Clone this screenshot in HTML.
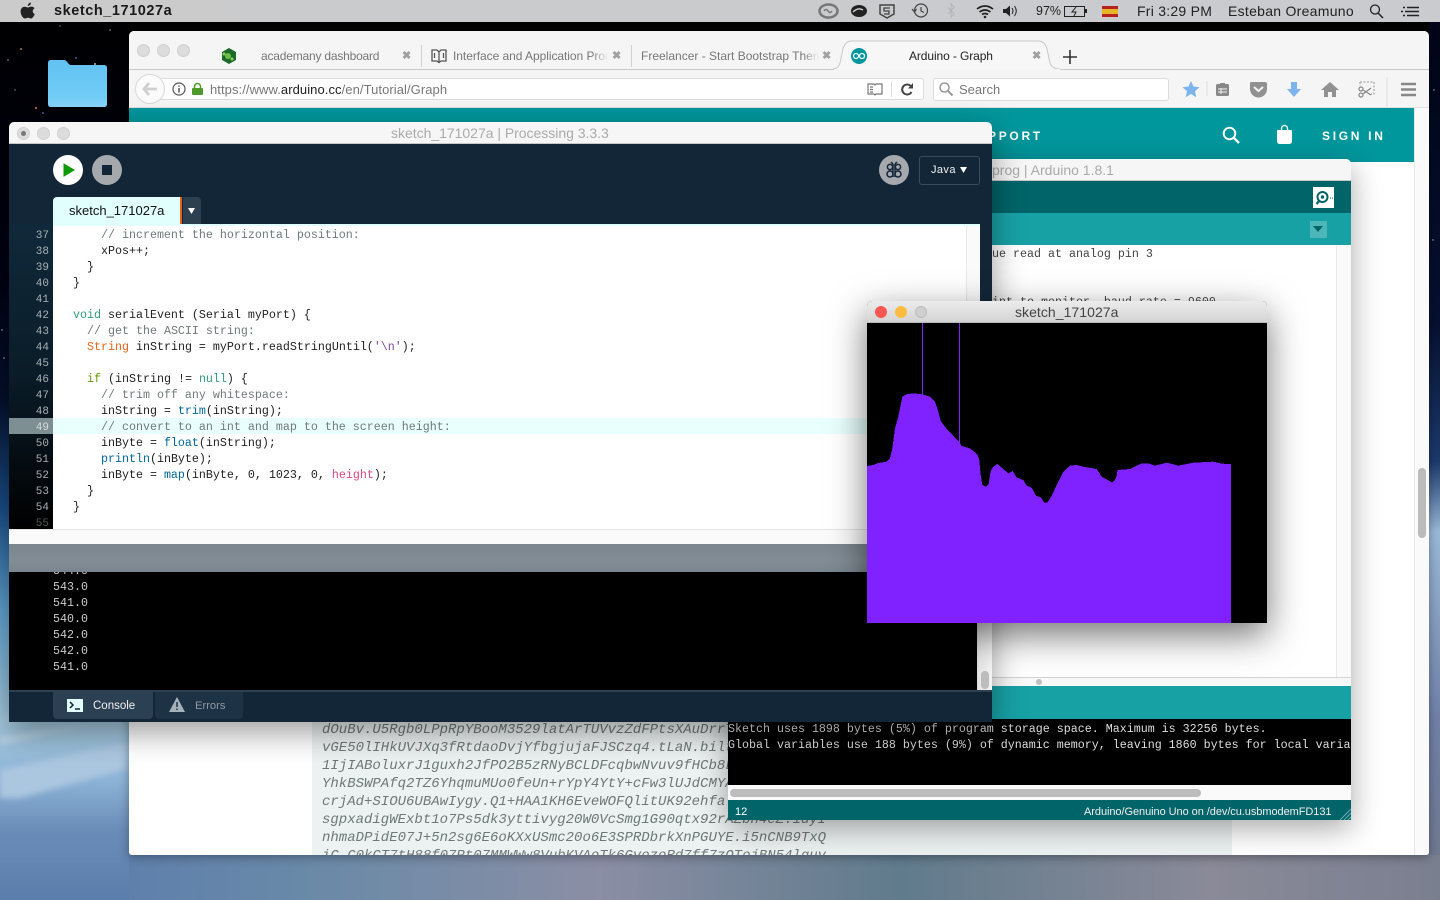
<!DOCTYPE html>
<html><head><meta charset="utf-8">
<style>
html,body{margin:0;padding:0;width:1440px;height:900px;overflow:hidden;background:#000;font-family:"Liberation Sans",sans-serif}
.a{position:absolute;white-space:pre}
.m{font-family:"Liberation Mono",monospace;font-size:11.67px;line-height:16px}
svg{position:absolute;overflow:visible}
.tab{font-size:12px;color:#777;top:49px;line-height:14px;overflow:hidden}
.fade{-webkit-mask-image:linear-gradient(90deg,#000 calc(100% - 16px),transparent);mask-image:linear-gradient(90deg,#000 calc(100% - 16px),transparent)}
.x{font-size:11px;color:#a0a0a0;font-weight:bold;top:49px;line-height:14px}
.c{color:#707a7a}.k{color:#33997e}.o{color:#e2661a}.i{color:#669900}.f{color:#006699}.h{color:#d94a7a}.s{color:#7d4793}
.menu{font-size:14px;color:#222;top:3px;line-height:16px}
.dot{border-radius:50%;width:11px;height:11px;background:#dcdcdc;border:1px solid #d0d0d0;box-sizing:content-box}
</style></head><body>
<div class="a" style="left:0;top:0;width:1440px;height:900px;background:linear-gradient(#000 0,#010214 280px,#04102c 400px,#1a4f8a 510px,#5fa3d0 610px,#a6cbe0 720px,#8db3d6 780px,#6a8db8 830px,#5b7dab 900px)"></div>
<div class="a" style="left:1429px;top:22px;width:11px;height:878px;background:linear-gradient(#020518 0,#061030 300px,#1c3a6c 440px,#9ab8d8 510px,#7080a8 700px,#70788c 860px,#7a7e8e 900px)"></div>
<div class="a" style="left:129px;top:855px;width:1311px;height:45px;background:linear-gradient(90deg,#5f80ac 0,#6a8aa8 190px,#8b8ea5 470px,#607b8c 770px,#8a8a98 1080px,#7a7f90 1311px)"></div>
<svg style="left:0;top:0" width="1440" height="900">
<g style="filter:blur(3px)"><polygon points="0,745 90,725 0,736" fill="#b5cfe2"/>
<polygon points="0,770 129,742 129,768 20,798 0,798" fill="#abc6df"/></g>
<g fill="#fff" opacity=".7"><circle cx="21" cy="49" r="1" fill="#e8a070"/><circle cx="36" cy="108" r="1.2" fill="#e89060"/><circle cx="43" cy="113" r="1" fill="#7080d0"/><circle cx="76" cy="58" r="1" fill="#6070c0"/><circle cx="95" cy="64" r="1"/><circle cx="8" cy="60" r=".7"/><circle cx="110" cy="30" r=".7"/><circle cx="60" cy="26" r=".6"/><circle cx="15" cy="90" r=".6"/><circle cx="1434" cy="90" r=".7"/><circle cx="2" cy="330" r=".8"/><circle cx="4" cy="358" r=".8"/><circle cx="1433" cy="240" r=".7"/></g>
</svg>
<!-- folder -->
<div class="a" style="left:48px;top:60px;width:59px;height:47px;background:linear-gradient(#62c2f2,#72ccf6 80%,#8ad4f7);clip-path:path('M0 3Q0 0 3 0H16Q18 0 20 3L22 5H56Q59 5 59 8V44Q59 47 56 47H3Q0 47 0 44Z')"></div>

<!-- menu bar -->
<div class="a" style="left:0;top:0;width:1440px;height:22px;background:linear-gradient(90deg,#cbcbcb,#c9cbcf)"></div>
<svg style="left:20px;top:2px" width="16" height="17" viewBox="0 0 16 17"><path d="M11 .5c0 2-1.500 3.500-3.200 3.500C7.700 2.200 9.300.6 11 .5zM14.800 12c-.9 2.300-2.400 4.500-3.800 4.500-1.200 0-1.500-.7-3-.7s-1.900.7-3 .7C3 16.500.6 12.800.6 9.500.6 6.300 2.700 4.700 4.700 4.700c1.300 0 2.300.8 3.200.8s1.900-.9 3.500-.9c1.100 0 2.400.5 3.200 1.700-2.700 1.600-2.300 5 .2 5.700z" fill="#222"/></svg>
<div class="a" style="left:54px;top:3px;font-size:14.5px;font-weight:bold;color:#1a1a1a;line-height:16px;letter-spacing:.56px">sketch_171027a</div>
<svg style="left:818px;top:3px" width="600" height="17" fill="none" stroke="#444">
<ellipse cx="10.500" cy="8" rx="9" ry="6.500" stroke="#777" stroke-width="2.500"/><path d="M6 8q2-3 4 0t4 0" stroke="#777" stroke-width="1.500"/>
<ellipse cx="41" cy="8" rx="8" ry="6" fill="#222" stroke="none"/><path d="M35 9q5-5 10-2" stroke="#ccc" stroke-width="1.500"/>
<path d="M62 2h14v9l-7 4-7-4z" stroke-width="1.500"/><path d="M72 5h-6v3h5v3h-5" stroke-width="1.300"/>
<circle cx="103" cy="7.500" r="6.500" stroke-width="1.200"/><path d="M103 4v4l3 1.500M94 6l2.500 3 2-3" stroke-width="1.200"/>
<path d="M133 1l3 3-3 3.500 3 3.500-3 3V1zM130 4.500l6 6.500M130 11l6-6.500" stroke="#b4b4b4"/>
<path d="M159 6q8-6 16 0M161.500 9q5.500-4 11 0M164 11.500q3-2 6 0" stroke-width="1.700" stroke="#222"/><circle cx="167" cy="14" r="1.300" fill="#222" stroke="none"/>
<path d="M185 6h3l4-3.500v11L188 10h-3z" fill="#222" stroke="none"/><path d="M194 5q2 3 0 6M196.500 3q3.500 5 0 10" stroke="#222"/>
<rect x="246.500" y="3.500" width="20" height="10" stroke="#222"/><path d="M258 4l-4 5h4l-2 4" stroke="#222"/><rect x="267" y="6" width="2" height="4" fill="#222" stroke="none"/>
<rect x="284" y="3" width="16" height="11" fill="#b8211c" stroke="none"/><rect x="284" y="6" width="16" height="5" fill="#e5b52a" stroke="none"/>
<circle cx="557" cy="6.500" r="4.500" stroke="#222" stroke-width="1.300"/><path d="M560 10l5 5" stroke="#222" stroke-width="1.500"/>
<path d="M585 4.500h2M589 4.500h12M583 8.500h2M587 8.500h14M585 12.500h2M589 12.500h12" stroke="#222" stroke-width="1.500"/>
</svg>
<div class="a menu" style="left:1036px;font-size:12.500px">97%</div>
<div class="a menu" style="left:1137px;letter-spacing:.25px">Fri 3:29 PM</div>
<div class="a menu" style="left:1228px;letter-spacing:.28px">Esteban Oreamuno</div>

<!-- browser -->
<div class="a" style="left:129px;top:31px;width:1300px;height:824px;background:#fff;border-radius:5px 5px 3px 3px;overflow:hidden;box-shadow:0 2px 10px rgba(0,0,0,.35)">
<div class="a" style="left:0;top:0;width:1300px;height:77px;background:#f5f5f5"></div>
<div class="a" style="left:0;top:38px;width:1300px;height:1px;background:#c8c8c8"></div>
<div class="a" style="left:0;top:76px;width:1300px;height:1px;background:#e0e0e0"></div>
<div class="a" style="left:0;top:77px;width:1285px;height:54px;background:#00979c"></div>
<div class="a" style="left:1285px;top:77px;width:15px;height:747px;background:#fafafa;border-left:1px solid #e8e8e8;box-sizing:border-box"></div>
<div class="a" style="left:1289px;top:437px;width:8px;height:70px;border-radius:4px;background:#bbb"></div>
<div class="a" style="left:183px;top:131px;width:920px;height:693px;background:#ecf1f1"></div>
<div class="a" style="left:1103px;top:131px;width:182px;height:693px;background:#fff"></div>
<div class="a" style="left:193px;top:690px;width:520px;height:134px;overflow:hidden;font:italic 14px/18px 'Liberation Mono',monospace;color:#6f7878;white-space:pre">dOuBv.U5Rgb0LPpRpYBooM3529latArTUVvzZdFPtsXAuDrrT
vGE50lIHkUVJXq3fRtdaoDvjYfbgjujaFJSCzq4.tLaN.bilt
1IjIABoluxrJ1guxh2JfPO2B5zRNyBCLDFcqbwNvuv9fHCb8L
YhkBSWPAfq2TZ6YhqmuMUo0feUn+rYpY4YtY+cFw3lUJdCMYA
crjAd+SIOU6UBAwIygy.Q1+HAA1KH6EveWOFQlitUK92ehfal
sgpxadigWExbt1o7Ps5dk3yttivyg20W0VcSmg1G90qtx92rAZbn4eZ.1uyI
nhmaDPidE07J+5n2sg6E6oKXxUSmc20o6E3SPRDbrkXnPGUYE.i5nCNB9TxQ
iC.C0kCT7tH88f07Pt07MMWWw8VubKVAoTk6GvozoRd7ff7zOTojBN54lguv</div>
</div>
<!-- browser chrome -->
<div class="a dot" style="left:137px;top:44px"></div><div class="a dot" style="left:157px;top:44px"></div><div class="a dot" style="left:177px;top:44px"></div>
<svg style="left:221px;top:48px" width="16" height="16"><path d="M8 0l7 4v8l-7 4-7-4V4z" fill="#1c6a28"/><circle cx="7" cy="8" r="3" fill="#6cc04a"/><circle cx="3" cy="6" r="1.500" fill="#8fd060"/><circle cx="11" cy="11" r="1.500" fill="#8fd060"/></svg>
<div class="a tab" style="left:261px;width:122px;letter-spacing:-.2px">academany dashboard</div><div class="a x" style="left:402px">✖</div>
<div class="a" style="left:421px;top:45px;width:1px;height:22px;background:#d0d0d0"></div>
<svg style="left:431px;top:49px" width="16" height="14" fill="none" stroke="#555" stroke-width="1.300"><path d="M1 1h5l2 2 2-2h5v11h-5l-2 1.500L6 12H1zM8 3v10M3.500 4v5M12.500 4v5"/></svg>
<div class="a tab fade" style="left:453px;width:155px;letter-spacing:-.05px">Interface and Application Prog</div><div class="a x" style="left:612px">✖</div>
<div class="a" style="left:631px;top:45px;width:1px;height:22px;background:#d0d0d0"></div>
<div class="a tab fade" style="left:641px;width:178px">Freelancer - Start Bootstrap Theme</div><div class="a x" style="left:822px">✖</div>
<svg style="left:0;top:0" width="1440" height="72"><path d="M833 69q5 0 7-6l3-14q2-8 9-8h186q7 0 9 8l3 14q2 6 10 6" fill="#f7f7f7" stroke="#c8c8c8"/><path d="M834 69h226v1H834z" fill="#f5f5f5"/></svg>
<svg style="left:851px;top:48px" width="16" height="16"><circle cx="8" cy="8" r="8" fill="#00979c"/><circle cx="5" cy="8" r="2.500" fill="none" stroke="#fff" stroke-width="1.200"/><circle cx="11" cy="8" r="2.500" fill="none" stroke="#fff" stroke-width="1.200"/></svg>
<div class="a tab" style="left:909px;color:#222;letter-spacing:-.1px">Arduino - Graph</div><div class="a x" style="left:1032px">✖</div>
<svg style="left:1063px;top:50px" width="14" height="14"><path d="M7 0v14M0 7h14" stroke="#333" stroke-width="1.600"/></svg>
<div class="a" style="left:150px;top:78px;width:774px;height:22px;background:#fff;border:1px solid #dcdcdc;border-radius:3px;box-sizing:border-box"></div>
<div class="a" style="left:135px;top:74px;width:30px;height:30px;border-radius:50%;background:#fbfbfb;border:1px solid #d8d8d8;box-sizing:border-box"></div>
<svg style="left:142px;top:82px" width="16" height="14"><path d="M7 1L2 7l5 6M2 7h13" fill="none" stroke="#cfcfcf" stroke-width="2.800"/></svg>
<svg style="left:172px;top:82px" width="14" height="14"><circle cx="7" cy="7" r="6" fill="none" stroke="#555" stroke-width="1.200"/><path d="M7 6v4.500M7 3.500v1.300" stroke="#555" stroke-width="1.500"/></svg>
<svg style="left:192px;top:83px" width="11" height="12"><rect x="0" y="5" width="11" height="7" rx="1" fill="#4d9a2a"/><path d="M2.500 5V3.500a3 3 0 016 0V5" fill="none" stroke="#4d9a2a" stroke-width="1.500"/></svg>
<div class="a" style="left:210px;top:82px;font-size:13px;line-height:15px;color:#777;letter-spacing:.07px">https://www.<span style="color:#222">arduino.cc</span>/en/Tutorial/Graph</div>
<svg style="left:867px;top:83px" width="16" height="13" fill="none" stroke="#777" stroke-width="1.200"><path d="M1 1h6l1 1 1-1h6v10H9l-1 1-1-1H1zM3 4h3M3 6.500h3M3 9h3"/></svg>
<div class="a" style="left:891px;top:82px;width:1px;height:15px;background:#ddd"></div>
<svg style="left:901px;top:83px" width="13" height="13"><path d="M10.500 4a5 5 0 100 5" fill="none" stroke="#444" stroke-width="2"/><path d="M12 0v5.500H7z" fill="#444"/></svg>
<div class="a" style="left:933px;top:78px;width:236px;height:23px;background:#fff;border:1px solid #dcdcdc;border-radius:3px;box-sizing:border-box"></div>
<svg style="left:939px;top:82px" width="14" height="14" fill="none" stroke="#999"><circle cx="5.500" cy="5.500" r="4.500" stroke-width="1.500"/><path d="M9 9l4.500 4.500" stroke-width="2"/></svg>
<div class="a" style="left:959px;top:82px;font-size:13px;line-height:15px;color:#777">Search</div>
<svg style="left:1170px;top:70px" width="259" height="38">
<path d="M21 11l2.500 5.500 6 .7-4.500 4 1.300 6L21 24l-5.300 3.200 1.300-6-4.500-4 6-.7z" fill="#7db4ee"/>
<path d="M37 11v15" stroke="#ddd"/>
<rect x="46" y="14" width="13" height="12" rx="1.500" fill="#888"/><path d="M50 13h5v3h-5z" fill="#888"/><path d="M48 19h9M48 22h9M51 18v6" stroke="#f5f5f5"/>
<path d="M81 12h14q2 0 2 2v5a8.500 8.500 0 01-17 0v-5q0-2 1-2z" fill="#919191"/><path d="M84 17l4.500 4 4.500-4" fill="none" stroke="#f5f5f5" stroke-width="2"/>
<path d="M121 12h6v7h4l-7 8-7-8h4z" fill="#7db4ee"/>
<path d="M160 12l9 8h-3v7h-4v-5h-4v5h-4v-7h-3z" fill="#919191"/>
<path d="M190 12h14v12h-3M190 12v4" stroke="#999" stroke-dasharray="2 1.500" fill="none"/><circle cx="191" cy="25" r="2" fill="none" stroke="#888" stroke-width="1.200"/><circle cx="191" cy="19" r="2" fill="none" stroke="#888" stroke-width="1.200"/><path d="M193 20l8 5M193 24l8-6" stroke="#888" stroke-width="1.200"/>
<path d="M217 7v31" stroke="#e0e0e0"/>
<path d="M231 14h15M231 19.500h15M231 25h15" stroke="#888" stroke-width="2.400"/>
</svg>
<div class="a" style="left:988px;top:129px;font-size:12px;font-weight:bold;color:#fff;letter-spacing:2.700px;line-height:15px">PPORT</div>
<svg style="left:1222px;top:126px" width="18" height="18" fill="none" stroke="#fff"><circle cx="7.500" cy="7.500" r="5.800" stroke-width="1.900"/><path d="M11.700 11.700l5.300 5.300" stroke-width="2.300"/></svg>
<svg style="left:1277px;top:125px" width="15" height="19"><path d="M1 5h13q1 0 1 1v10q0 3-3 3H3q-3 0-3-3V6q0-1 1-1z" fill="#fff"/><path d="M4.500 6V3.500a3 3 0 016 0V6" fill="none" stroke="#fff" stroke-width="1.300"/></svg>
<div class="a" style="left:1322px;top:129px;font-size:12px;font-weight:bold;color:#fff;letter-spacing:2.700px;line-height:15px">SIGN IN</div>

<!-- arduino window -->
<div class="a" style="left:728px;top:159px;width:623px;height:661px;background:#fff;border-radius:5px 5px 0 0;overflow:hidden;box-shadow:0 8px 30px rgba(0,0,0,.35)">
<div class="a" style="left:0;top:0;width:623px;height:22px;background:#f6f6f6;border-bottom:1px solid #c8c8c8;box-sizing:border-box"></div>
<div class="a" style="left:264px;top:3px;font-size:14px;line-height:16px;color:#aaa">prog | Arduino 1.8.1</div>
<div class="a" style="left:0;top:22px;width:623px;height:32px;background:#006468"></div>
<div class="a" style="left:0;top:54px;width:623px;height:32px;background:#17a1a5"></div>
<div class="a" style="left:585px;top:28px;width:21px;height:21px;background:#fff"></div>
<svg style="left:585px;top:28px" width="21" height="21" fill="none" stroke="#006468"><circle cx="9.500" cy="10" r="5" stroke-width="2"/><circle cx="9.500" cy="10" r="1.200" fill="#006468"/><path d="M6 14l-2.500 3" stroke-width="2.200"/><path d="M17 11h1M19 11h1"/></svg>
<div class="a" style="left:582px;top:62px;width:17px;height:17px;background:#4cb6b9"></div>
<svg style="left:585px;top:67px" width="11" height="7"><path d="M0 0h10L5 6z" fill="#006468"/></svg>
<div class="a" style="left:608px;top:86px;width:15px;height:432px;background:#fafafa;border-left:1px solid #e8e8e8;box-sizing:border-box"></div>
<div class="a m" style="left:264px;top:87px;color:#444">ue read at analog pin 3


int to monitor, baud rate = 9600</div>
<div class="a" style="left:0;top:518px;width:623px;height:1px;background:#d4d4d4"></div>
<div class="a" style="left:0;top:519px;width:623px;height:8px;background:#f8f8f8"></div>
<div class="a" style="left:308px;top:520px;width:6px;height:6px;border-radius:50%;background:#c0c0c0"></div>
<div class="a" style="left:0;top:527px;width:623px;height:33px;background:#17a1a5"></div>
<div class="a" style="left:0;top:560px;width:623px;height:66px;background:#000"></div>
<div class="a m" style="left:0;top:562px;color:#ddd">Sketch uses 1898 bytes (5%) of program storage space. Maximum is 32256 bytes.
Global variables use 188 bytes (9%) of dynamic memory, leaving 1860 bytes for local variables. Maximum is</div>
<div class="a" style="left:0;top:626px;width:623px;height:15px;background:#fafafa"></div>
<div class="a" style="left:2px;top:630px;width:471px;height:8px;border-radius:4px;background:#bdbdbd"></div>
<div class="a" style="left:0;top:641px;width:623px;height:20px;background:#006468"></div>
<div class="a" style="left:7px;top:647px;font-size:11px;line-height:13px;color:#fff">12</div>
<div class="a" style="left:356px;top:647px;font-size:11px;line-height:13px;color:#eee;letter-spacing:-.06px">Arduino/Genuino Uno on /dev/cu.usbmodemFD131</div>
<svg style="left:612px;top:650px" width="11" height="11"><path d="M0 11L11 0M4 11l7-7M8 11l3-3" stroke="#6aa8aa"/></svg>
</div>

<!-- processing window -->
<div class="a" style="left:9px;top:122px;width:983px;height:600px;background:#132638;border-radius:5px 5px 0 0;overflow:hidden;box-shadow:0 10px 32px rgba(0,0,0,.4)">
<div class="a" style="left:0;top:0;width:983px;height:22px;background:#f6f6f6;border-bottom:1px solid #c8c8c8;box-sizing:border-box"></div>
<div class="a" style="left:382px;top:3px;font-size:14px;line-height:16px;color:#aaa;letter-spacing:-.02px">sketch_171027a | Processing 3.3.3</div>
<div class="a dot" style="left:8px;top:5px"></div><div class="a dot" style="left:28px;top:5px"></div><div class="a dot" style="left:48px;top:5px"></div>
<div class="a" style="left:12px;top:9px;width:5px;height:5px;border-radius:50%;background:#777"></div>
<svg style="left:44px;top:33px" width="70" height="30"><circle cx="15" cy="15" r="15" fill="#fff"/><path d="M11 9l10 6-10 6z" fill="#0a9a00" stroke="#0a9a00"/><circle cx="54" cy="15" r="15" fill="#a5a9ae"/><rect x="49" y="10" width="10" height="10" fill="#132638"/></svg>
<svg style="left:870px;top:33px" width="30" height="30"><circle cx="15" cy="15" r="15" fill="#a5a9ae"/><g fill="none" stroke="#132638" stroke-width="1.500"><circle cx="11" cy="12" r="2.600"/><circle cx="11" cy="19" r="3"/><circle cx="19" cy="12" r="2.600"/><circle cx="19" cy="19" r="3"/><path d="M14 9v13M16 9v13M12 7l2 2M18 7l-2 2"/></g></svg>
<div class="a" style="left:910px;top:34px;width:61px;height:29px;border:1px solid #3a4c5c;border-radius:3px;box-sizing:border-box"></div>
<div class="a" style="left:922px;top:42px;font-size:11px;line-height:13px;color:#eee;letter-spacing:.4px">Java</div>
<svg style="left:951px;top:45px" width="8" height="7"><path d="M0 0h7L3.500 6z" fill="#fff"/></svg>
<div class="a" style="left:44px;top:75px;width:128px;height:27px;background:#e0fffd;border-radius:4px 0 0 0"></div>
<div class="a" style="left:171px;top:75px;width:2px;height:27px;background:#e2661a"></div>
<div class="a" style="left:60px;top:81px;font-size:13px;line-height:15px;color:#111">sketch_171027a</div>
<div class="a" style="left:174px;top:75px;width:18px;height:27px;background:#2c4050;border-radius:0 4px 0 0"></div>
<svg style="left:179px;top:86px" width="8" height="7"><path d="M0 0h7L3.500 6z" fill="#fff"/></svg>
<!-- editor -->
<div class="a" style="left:0;top:102px;width:44px;height:305px;background:linear-gradient(#10293a,#0a1c28 150px,#000)"></div>
<div class="a" style="left:44px;top:102px;width:927px;height:305px;background:#fff;border-top:2px solid #e0fffd;box-sizing:border-box"></div>
<div class="a" style="left:957px;top:104px;width:14px;height:303px;background:#fafafa;border-left:1px solid #e8e8e8;box-sizing:border-box"></div>
<div class="a" style="left:44px;top:296px;width:913px;height:16px;background:#e8fffd"></div>
<div class="a" style="left:0;top:296px;width:44px;height:16px;background:#7d8f92"></div>
<div class="a" style="left:0;top:106px;width:44px;height:301px;overflow:hidden;font:11px/16px 'Liberation Mono',monospace;color:#a8b0b4;white-space:pre;text-align:right"><div style="padding-right:4px">37
38
39
40
41
42
43
44
45
46
47
48
<span style="color:#d4dcdc">49</span>
50
51
52
53
54
<span style="color:#555">55</span></div></div>
<div class="a m" style="left:64px;top:105px;color:#222;height:302px;overflow:hidden"><span class="c">    // increment the horizontal position:</span>
    xPos++;
  }
}

<span class="k">void</span> serialEvent (Serial myPort) {
  <span class="c">// get the ASCII string:</span>
  <span class="o">String</span> inString = myPort.readStringUntil(<span class="s">'\n'</span>);

  <span class="i">if</span> (inString != <span class="k">null</span>) {
    <span class="c">// trim off any whitespace:</span>
    inString = <span class="f">trim</span>(inString);
    <span class="c">// convert to an int and map to the screen height:</span>
    inByte = <span class="f">float</span>(inString);
    <span class="f">println</span>(inByte);
    inByte = <span class="f">map</span>(inByte, 0, 1023, 0, <span class="h">height</span>);
  }
}</div>
<div class="a" style="left:0;top:407px;width:983px;height:15px;background:#fafafa;border-top:1px solid #e4e4e4;box-sizing:border-box"></div>
<div class="a" style="left:0;top:422px;width:983px;height:28px;background:linear-gradient(#7a858e,#828d96 60%,#7a858e)"></div>
<div class="a" style="left:0;top:450px;width:968px;height:118px;background:#000;overflow:hidden">
<div class="a m" style="left:44px;top:-9px;color:#ccc">544.0
543.0
541.0
540.0
542.0
542.0
541.0</div></div>
<div class="a" style="left:968px;top:450px;width:15px;height:118px;background:linear-gradient(90deg,#e4e4e4,#f4f4f4);border-left:1px solid #ddd;box-sizing:border-box"></div>
<div class="a" style="left:972px;top:549px;width:8px;height:18px;border-radius:4px;background:#bdbdbd"></div>
<div class="a" style="left:0;top:568px;width:983px;height:32px;background:#132638;border-top:2px solid #2c4050;box-sizing:border-box"></div>
<div class="a" style="left:44px;top:570px;width:100px;height:27px;background:#2b4153;border-radius:0 0 4px 4px"></div>
<div class="a" style="left:146px;top:570px;width:88px;height:27px;background:#1e3245;border-radius:0 0 4px 4px"></div>
<svg style="left:58px;top:577px" width="16" height="13"><rect width="16" height="13" fill="#e0fffd"/><path d="M3 3l3 3-3 3" fill="none" stroke="#132638" stroke-width="1.500"/><path d="M8 10h5" stroke="#132638" stroke-width="1.500"/></svg>
<div class="a" style="left:84px;top:577px;font-size:11.500px;line-height:14px;color:#f0f0f0">Console</div>
<svg style="left:160px;top:575px" width="16" height="15"><path d="M8 0l8 15H0z" fill="#a5b2ba"/><path d="M8 5v5M8 11.500v1.500" stroke="#1e3245" stroke-width="1.500"/></svg>
<div class="a" style="left:186px;top:577px;font-size:11.200px;line-height:14px;color:#8d9aa4">Errors</div>
</div>

<!-- graph window -->
<div class="a" style="left:867px;top:301px;width:400px;height:322px;background:#000;border-radius:5px 5px 0 0;overflow:hidden;box-shadow:0 12px 36px rgba(0,0,0,.55)">
<div class="a" style="left:0;top:0;width:400px;height:22px;background:linear-gradient(#ececec,#d4d4d4);border-bottom:1px solid #b8b8b8;box-sizing:border-box"></div>
<div class="a" style="left:148px;top:3px;font-size:14px;line-height:16px;color:#444;letter-spacing:.05px">sketch_171027a</div>
<div class="a" style="left:8px;top:5px;width:12px;height:12px;border-radius:50%;background:#fc5753"></div>
<div class="a" style="left:28px;top:5px;width:12px;height:12px;border-radius:50%;background:#fdbc40"></div>
<div class="a" style="left:48px;top:5px;width:12px;height:12px;border-radius:50%;background:#cfcfcf;border:1px solid #bdbdbd;box-sizing:border-box"></div>
</div>
<svg style="left:860px;top:295px" width="420" height="340" viewBox="0 0 1260 1020">
<path d="M187.500 84V300M298.500 84V445" stroke="#7f22ff" stroke-width="3"/>
<polygon shape-rendering="crispEdges" fill="#7f22ff" points="21,513 40,510 55,504 80,500 90,490 97,460 105,400 115,365 127,305 140,298 160,295 187,298 210,305 225,320 235,350 242,378 260,402 297,440 305,453 330,460 352,478 358,495 362,540 367,570 378,575 386,568 392,528 400,515 412,507 430,522 445,535 458,528 470,548 490,555 500,572 515,578 528,602 542,607 553,623 562,622 575,603 590,570 610,530 630,512 650,510 670,515 710,522 725,545 757,563 768,550 773,525 810,522 845,505 865,505 885,512 920,503 955,512 1000,503 1060,500 1085,506 1113,507 1113,984 21,984"/>
</svg>
</body></html>
